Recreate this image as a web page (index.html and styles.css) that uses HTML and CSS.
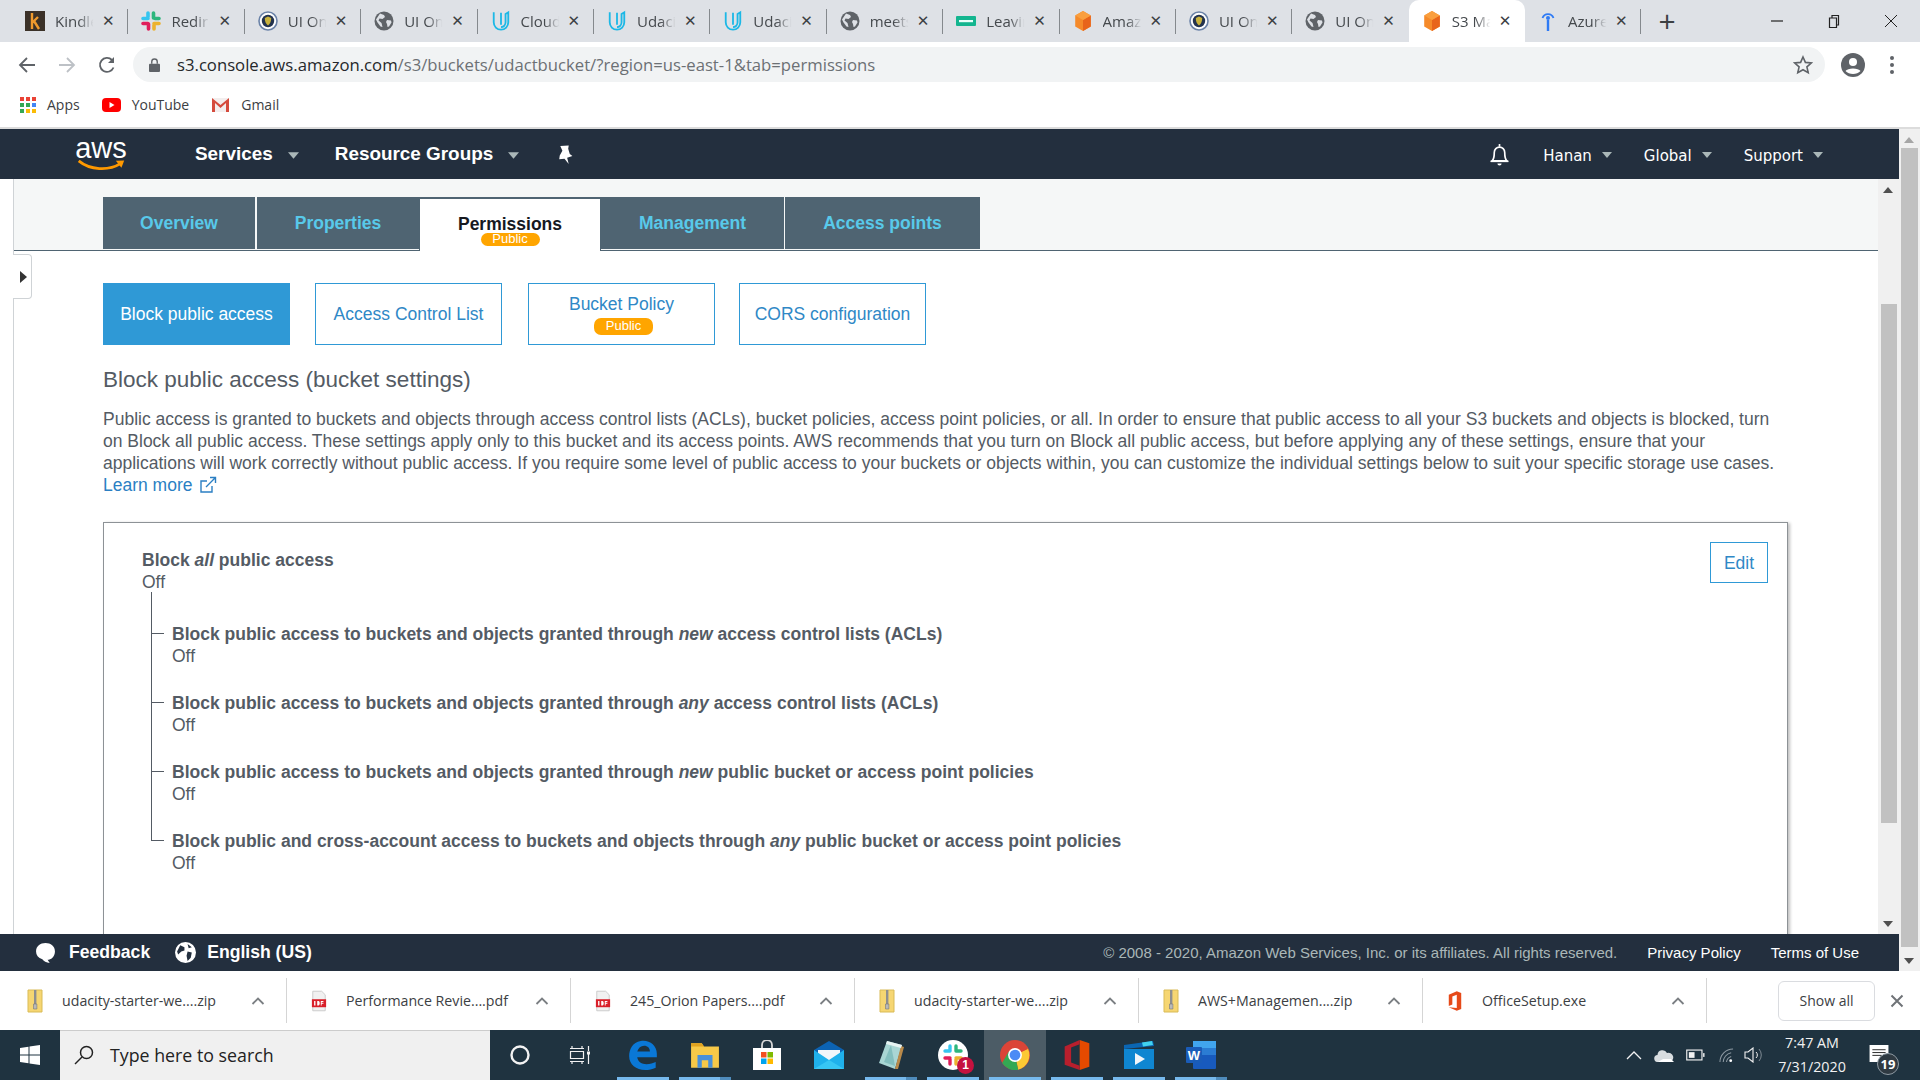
FILE: index.html
```html
<!DOCTYPE html>
<html lang="en">
<head>
<meta charset="utf-8">
<title>S3 Management Console</title>
<link rel="stylesheet" href="styles.css">
</head>
<body>
<svg class="defs" width="0" height="0" aria-hidden="true">
  <symbol id="globe" viewBox="0 0 20 20"><circle cx="10" cy="10" r="9.500" fill="#5f6368"/><path d="M6 2.500l4 1.500 1 2-2.500 2-3-.5-1 2 3 2.500 1 4-2-.5-3-4-1.500-3zM13 9l4 .5.500 2-2.500 4-1.500.5-.5-3-1-2z" fill="#dee1e6"/></symbol>
  <symbol id="udacity" viewBox="0 0 22 22"><path d="M3 1.500v11c0 4.500 3.500 8 8 8s8-3.500 8-8v-11l-3 1.800v9.200c0 3-2.200 5.200-5 5.200" fill="none" stroke="#1cb8e6" stroke-width="2"/><path d="M11 2v13" stroke="#1cb8e6" stroke-width="2"/></symbol>
  <symbol id="seal" viewBox="0 0 20 20"><circle cx="10" cy="10" r="9" fill="#fff" stroke="#6b83a8" stroke-width="1.600"/><circle cx="10" cy="10" r="6.200" fill="#23334f"/><path d="M10 5.500l3.200 1.500c0 4-1.400 6-3.200 7.500C8.200 13 6.800 11 6.800 7z" fill="#c9b23c"/></symbol>
  <symbol id="cube" viewBox="0 0 20 24"><path d="M10 1l8.500 5v12L10 23l-8.500-5V6z" fill="#f58a2a"/><path d="M10 11l8.500-5v12L10 23z" fill="#e8641b"/><path d="M10 1l8.500 5L10 11 1.500 6z" fill="#fa9f3e"/></symbol>
  <symbol id="zip" viewBox="0 0 16 24"><path d="M1 1h14v22H1z" fill="#f6d672" stroke="#d9bb57"/><path d="M7 1h2.400v14H7z" fill="#8f8f8f"/><path d="M6.500 15h3.400v5H6.500z" fill="#b9b9b9" stroke="#777" stroke-width=".6"/></symbol>
  <symbol id="pdf" viewBox="0 0 18 24"><path d="M2 1h10l4 4v18H2z" fill="#f1f1f1" stroke="#c8c8c8"/><path d="M1 10h16v9H1z" fill="#d9202a"/><path d="M3.500 17v-5h1.500v5zM7 17v-5h1.500c1.800 0 1.800 5 0 5zM11 17v-5h3v1h-2v1h2v1h-2v2z" fill="#fff"/></symbol>
  <symbol id="chev" viewBox="0 0 14 10"><path d="M1.500 8L7 2.500 12.500 8" fill="none" stroke="#7b7f83" stroke-width="1.800"/></symbol>
  <symbol id="caret" viewBox="0 0 10 6"><path d="M0 0h10L5 6z" fill="#aab7b8"/></symbol>
</svg>

<header class="tabstrip">
  <div class="tab"><svg class="fav" viewBox="0 0 20 20"><rect width="20" height="20" fill="#3b3128"/><path d="M7 2v16M7 12l6-6M9 10l5 8" stroke="#f09a2d" stroke-width="2.400" fill="none"/></svg><span class="tab-label">Kindle</span><span class="tab-x">✕</span></div>
  <div class="tab"><svg class="fav" viewBox="0 0 20 20"><g stroke-width="3.600" stroke-linecap="round"><path d="M7 2v4M2 7.500h5" stroke="#36c5f0"/><path d="M18 7.500h-4M12.500 2v5" stroke="#2eb67d"/><path d="M13 18v-4M18 12.500h-5" stroke="#ecb22e"/><path d="M2 12.500h5M7.500 18v-5" stroke="#e01e5a"/></g></svg><span class="tab-label">Redire</span><span class="tab-x">✕</span></div>
  <div class="tab"><svg class="fav"><use href="#seal"/></svg><span class="tab-label">UI On</span><span class="tab-x">✕</span></div>
  <div class="tab"><svg class="fav"><use href="#globe"/></svg><span class="tab-label">UI On</span><span class="tab-x">✕</span></div>
  <div class="tab"><svg class="fav"><use href="#udacity"/></svg><span class="tab-label">Cloud</span><span class="tab-x">✕</span></div>
  <div class="tab"><svg class="fav"><use href="#udacity"/></svg><span class="tab-label">Udaci</span><span class="tab-x">✕</span></div>
  <div class="tab"><svg class="fav"><use href="#udacity"/></svg><span class="tab-label">Udaci</span><span class="tab-x">✕</span></div>
  <div class="tab"><svg class="fav"><use href="#globe"/></svg><span class="tab-label">meets</span><span class="tab-x">✕</span></div>
  <div class="tab"><svg class="fav" viewBox="0 0 20 20"><rect y="5" width="20" height="10" rx="1" fill="#13b58f"/><rect x="3" y="9" width="14" height="2.200" fill="#e9fff9"/></svg><span class="tab-label">Leavin</span><span class="tab-x">✕</span></div>
  <div class="tab"><svg class="fav"><use href="#cube"/></svg><span class="tab-label">Amaz</span><span class="tab-x">✕</span></div>
  <div class="tab"><svg class="fav"><use href="#seal"/></svg><span class="tab-label">UI On</span><span class="tab-x">✕</span></div>
  <div class="tab tab-before-active"><svg class="fav"><use href="#globe"/></svg><span class="tab-label">UI On</span><span class="tab-x">✕</span></div>
  <div class="tab tab-active"><svg class="fav"><use href="#cube"/></svg><span class="tab-label">S3 Ma</span><span class="tab-x">✕</span></div>
  <div class="tab"><svg class="fav" viewBox="0 0 20 22"><path d="M4.500 8a5.800 5.800 0 0 1 11 0" fill="none" stroke="#2f7bf5" stroke-width="1.800"/><circle cx="10" cy="8" r="2" fill="#2f7bf5"/><path d="M10 10v11" stroke="#2f7bf5" stroke-width="2.400"/></svg><span class="tab-label">Azure</span><span class="tab-x">✕</span></div>
  <span class="newtab">+</span>
  <div class="winctl">
    <svg viewBox="0 0 14 14"><path d="M1 7h12" stroke="#222" stroke-width="1.200"/></svg>
    <svg viewBox="0 0 14 14"><path d="M2.500 4h7v9.500h-7zM5 4V1.500h6.500V11H9.500" fill="none" stroke="#222" stroke-width="1.200"/></svg>
    <svg viewBox="0 0 14 14"><path d="M1 1l12 12M13 1L1 13" stroke="#222" stroke-width="1"/></svg>
  </div>
</header>

<nav class="toolbar">
  <svg class="tool" viewBox="0 0 18 18"><path d="M17 9H2M9 2L2 9l7 7" fill="none" stroke="#5f6368" stroke-width="1.800"/></svg>
  <svg class="tool" viewBox="0 0 18 18"><path d="M1 9h15M9 2l7 7-7 7" fill="none" stroke="#bdc1c6" stroke-width="1.800"/></svg>
  <svg class="tool" viewBox="0 0 18 18"><path d="M15.500 11.500A7 7 0 1 1 14 4" fill="none" stroke="#5f6368" stroke-width="1.800"/><path d="M16 1v6h-6z" fill="#5f6368"/></svg>
  <div class="omnibox">
    <svg class="lock" viewBox="0 0 12 15"><path d="M3 6V4a3 3 0 0 1 6 0v2" fill="none" stroke="#5f6368" stroke-width="1.500"/><rect y="6" width="12" height="9" rx="1" fill="#5f6368"/></svg>
    <span class="url"><b>s3.console.aws.amazon.com</b>/s3/buckets/udactbucket/?region=us-east-1&amp;tab=permissions</span>
    <svg class="star" viewBox="0 0 20 20"><path d="M10 2l2.400 5.400 5.900.6-4.400 3.900 1.300 5.800L10 14.700l-5.200 3 1.300-5.800L1.700 8l5.900-.6z" fill="none" stroke="#5f6368" stroke-width="1.600"/></svg>
  </div>
  <svg class="avatar" viewBox="0 0 24 24"><circle cx="12" cy="12" r="12" fill="#5f6368"/><circle cx="12" cy="9" r="4" fill="#fff"/><path d="M4.500 18c2-3.500 13-3.500 15 0-3.500 4-11.500 4-15 0z" fill="#fff"/></svg>
  <span class="kebab"><i></i><i></i><i></i></span>
</nav>

<nav class="bookmarks">
  <a class="bm"><svg class="bm-ic apps" viewBox="0 0 16 16"><g fill="#ea4335"><rect width="4" height="4"/><rect x="6" width="4" height="4"/><rect x="12" width="4" height="4"/></g><g fill="#34a853"><rect y="6" width="4" height="4"/><rect x="6" y="6" width="4" height="4"/></g><rect x="12" y="6" width="4" height="4" fill="#4285f4"/><g fill="#fbbc05"><rect x="6" y="12" width="4" height="4"/><rect x="12" y="12" width="4" height="4"/></g><rect y="12" width="4" height="4" fill="#34a853"/></svg>Apps</a>
  <a class="bm"><svg class="bm-ic yt" viewBox="0 0 19 14"><rect width="19" height="14" rx="4" fill="#f00"/><path d="M7.500 4l5 3-5 3z" fill="#fff"/></svg>YouTube</a>
  <a class="bm"><svg class="bm-ic gm" viewBox="0 0 19 15"><path d="M1 1h17v14H1z" fill="#f3eeee"/><path d="M1 15V1l8.500 7L18 1v14h-3V6l-5.500 5L4 6v9z" fill="#d54b3d"/></svg>Gmail</a>
</nav>

<div class="console">
  <div class="page">
    <div class="awsnav">
      <div class="aws-logo"><span>aws</span><svg viewBox="0 0 52 14"><path d="M2 2c12 10 32 11 45 3" fill="none" stroke="#f90" stroke-width="3"/><path d="M42 2l9-.5-3 8z" fill="#f90"/></svg></div>
      <span class="nav-main nav-services">Services</span><svg class="nav-caret"><use href="#caret"/></svg>
      <span class="nav-main nav-groups">Resource Groups</span><svg class="nav-caret"><use href="#caret"/></svg>
      <svg class="pin" viewBox="0 0 16 18"><path d="M4 1l8-.5-.5 3 1.500 5 2.500 2-5 1.500L12 18 8 13l-5 .5.500-3.500 2.500-4.500z" fill="#fff"/></svg>
      <span class="nav-space"></span>
      <svg class="bell" viewBox="0 0 20 22"><path d="M3 17c2-2 2-4 2-8a5 5 0 0 1 10 0c0 4 0 6 2 8z" fill="none" stroke="#fff" stroke-width="1.600"/><path d="M1.500 17.500h17" stroke="#fff" stroke-width="1.600"/><path d="M8 19.500a2 2 0 0 0 4 0z" fill="#fff"/><path d="M10 1v2.500" stroke="#fff" stroke-width="1.600"/></svg>
      <span class="nav-sub">Hanan</span><svg class="nav-caret sm"><use href="#caret"/></svg>
      <span class="nav-sub">Global</span><svg class="nav-caret sm"><use href="#caret"/></svg>
      <span class="nav-sub">Support</span><svg class="nav-caret sm"><use href="#caret"/></svg>
    </div>

    <div class="workspace">
      <main class="main">
        <div class="tabbar">
          <a class="ptab ptab-first">Overview</a>
          <a class="ptab ptab-props">Properties</a>
          <a class="ptab ptab-on">Permissions<span class="badge badge-tab">Public</span></a>
          <a class="ptab ptab-mgmt">Management</a>
          <a class="ptab ptab-ap">Access points</a>
        </div>
        <span class="handle"><i></i></span>
        <div class="body">
          <div class="subtabs">
            <a class="sub sub-on">Block public access</a>
            <a class="sub">Access Control List</a>
            <a class="sub sub-policy">Bucket Policy<span class="badge badge-sub">Public</span></a>
            <a class="sub sub-cors">CORS configuration</a>
          </div>
          <h2 class="title">Block public access (bucket settings)</h2>
          <p class="intro">Public access is granted to buckets and objects through access control lists (ACLs), bucket policies, access point policies, or all. In order to ensure that public access to all your S3 buckets and objects is blocked, turn<br>on Block all public access. These settings apply only to this bucket and its access points. AWS recommends that you turn on Block all public access, but before applying any of these settings, ensure that your<br>applications will work correctly without public access. If you require some level of public access to your buckets or objects within, you can customize the individual settings below to suit your specific storage use cases.<br><a class="learn">Learn more <svg class="ext" viewBox="0 0 18 18"><path d="M13 10v6H2V5h6" fill="none" stroke="#2b7fc3" stroke-width="1.400"/><path d="M7 11l9-9M11 1.500h5.500V7" fill="none" stroke="#2b7fc3" stroke-width="1.400"/></svg></a></p>
          <section class="card">
            <div class="card-head">
              <div class="card-lead"><strong>Block <em>all</em> public access</strong><span>Off</span></div>
              <a class="edit">Edit</a>
            </div>
            <ul class="tree">
              <li><strong>Block public access to buckets and objects granted through <em>new</em> access control lists (ACLs)</strong><span>Off</span></li>
              <li><strong>Block public access to buckets and objects granted through <em>any</em> access control lists (ACLs)</strong><span>Off</span></li>
              <li><strong>Block public access to buckets and objects granted through <em>new</em> public bucket or access point policies</strong><span>Off</span></li>
              <li><strong>Block public and cross-account access to buckets and objects through <em>any</em> public bucket or access point policies</strong><span>Off</span></li>
            </ul>
          </section>
        </div>
      </main>
      <div class="inner-scroll"><i class="arr up"></i><b class="inner-thumb"></b><i class="arr down"></i></div>
    </div>

    <footer class="awsfoot">
      <svg class="fic" viewBox="0 0 20 20"><path d="M10 1c5 0 9 3 9 8s-4 8-7 8l2 3c-3 0-6-2-7-3.500C3 15 1 12.500 1 9c0-5 4-8 9-8z" fill="#fff"/></svg>
      <span class="foot-b foot-fb">Feedback</span>
      <svg class="fic fic-globe" viewBox="0 0 20 20"><circle cx="10" cy="10" r="10" fill="#fff"/><path d="M5 3l4 2 0 3-3 1-3 3-1-3zM12 9l4 1-1 5-3 3-1-5zM12 2l4 3-3 1z" fill="#232f3e"/></svg>
      <span class="foot-b">English (US)</span>
      <span class="foot-space"></span>
      <span class="copy">© 2008 - 2020, Amazon Web Services, Inc. or its affiliates. All rights reserved.</span>
      <a class="flink">Privacy Policy</a>
      <a class="flink">Terms of Use</a>
    </footer>
  </div>
  <div class="outer-scroll"><i class="arr up light"></i><b class="outer-thumb"></b><i class="arr down"></i></div>
</div>

<section class="downloads">
  <div class="dl"><svg class="dl-ic"><use href="#zip"/></svg><span class="dl-name">udacity-starter-we....zip</span><svg class="dl-chev"><use href="#chev"/></svg></div>
  <div class="dl"><svg class="dl-ic"><use href="#pdf"/></svg><span class="dl-name">Performance Revie....pdf</span><svg class="dl-chev"><use href="#chev"/></svg></div>
  <div class="dl"><svg class="dl-ic"><use href="#pdf"/></svg><span class="dl-name">245_Orion Papers....pdf</span><svg class="dl-chev"><use href="#chev"/></svg></div>
  <div class="dl"><svg class="dl-ic"><use href="#zip"/></svg><span class="dl-name">udacity-starter-we....zip</span><svg class="dl-chev"><use href="#chev"/></svg></div>
  <div class="dl"><svg class="dl-ic"><use href="#zip"/></svg><span class="dl-name">AWS+Managemen....zip</span><svg class="dl-chev"><use href="#chev"/></svg></div>
  <div class="dl"><svg class="dl-ic" viewBox="0 0 18 24"><path d="M2 5l9-4 5 2v18l-5 2-9-4 9 1V5l-5 2v9l-4 1.500z" fill="#e64a19"/></svg><span class="dl-name">OfficeSetup.exe</span><svg class="dl-chev"><use href="#chev"/></svg></div>
  <a class="showall">Show all</a>
  <svg class="dl-close" viewBox="0 0 14 14"><path d="M1.500 1.500l11 11M12.500 1.500l-11 11" stroke="#6f7377" stroke-width="2"/></svg>
</section>

<footer class="taskbar">
  <div class="start"><svg viewBox="0 0 20 20"><path d="M0 3l8.500-1.200V9.500H0zM9.500 1.600L20 0v9.500H9.500zM0 10.500h8.500v7.700L0 17zM9.500 10.500H20V20L9.500 18.400z" fill="#fff"/></svg></div>
  <div class="search"><svg viewBox="0 0 20 20"><circle cx="12.500" cy="7.500" r="6" fill="none" stroke="#222" stroke-width="1.500"/><path d="M8 12l-7 7" stroke="#222" stroke-width="1.500"/></svg><span>Type here to search</span></div>
  <div class="sys"><svg viewBox="0 0 20 20"><circle cx="10" cy="10" r="8.500" fill="none" stroke="#f2f2f2" stroke-width="2.400"/></svg></div>
  <div class="sys"><svg viewBox="0 0 22 20"><path d="M1 3.500h14M1 16.500h14M1.500 6.500h13v7h-13zM3 1v2M13 1v2M3 17v2M13 17v2M19.500 1v5M19.500 9v10" fill="none" stroke="#f2f2f2" stroke-width="1.200"/><rect x="18" y="6.500" width="3" height="3" fill="#f2f2f2"/></svg></div>
  <div class="app run"><svg viewBox="0 0 26 26"><path d="M25 15H8c.5 4 4 6 8 6 3 0 6-1 8-2v5c-3 1.500-6 2-9 2-8 0-14-5-14-12C1 8 4 2 11 .8 18-.5 25 4 25 12zM19 10c0-3-2-5-5-5-3 0-5 2-6 5z" fill="#0a78d7"/></svg></div>
  <div class="app run multi"><svg viewBox="0 0 28 26"><path d="M1 2h10l2 3h14v20H1z" fill="#f7c948"/><path d="M1 2h10l2 3H1z" fill="#e0a21f"/><path d="M7 25V13h14v12h-4v-7h-6v7z" fill="#4a90d9"/></svg></div>
  <div class="app"><svg viewBox="0 0 28 30"><path d="M9 9V5a5 5 0 0 1 10 0v4" fill="none" stroke="#d8d8d8" stroke-width="1.800"/><rect y="8" width="28" height="22" fill="#fff"/><rect x="8" y="12" width="5.500" height="5.500" fill="#f25022"/><rect x="14.500" y="12" width="5.500" height="5.500" fill="#7fba00"/><rect x="8" y="18.500" width="5.500" height="5.500" fill="#00a4ef"/><rect x="14.500" y="18.500" width="5.500" height="5.500" fill="#ffb900"/></svg></div>
  <div class="app"><svg viewBox="0 0 30 28"><path d="M0 9L15 0l15 9v19H0z" fill="#0c63b3"/><path d="M4 9h22v7l-11 6-11-6z" fill="#f2f6fa"/><path d="M0 9l15 10L30 9v19H0z" fill="#1fb1ec"/><path d="M0 28l15-9 15 9z" fill="#37c6f4"/></svg></div>
  <div class="app run multi"><svg viewBox="0 0 28 30"><path d="M10 1l15 4-7 24L2 23z" fill="#a9d6d4"/><path d="M24 6l3 1-6 22-3 0z" fill="#b98a4a"/><path d="M10 1l15 4-1 3L9 4z" fill="#e7f3f2"/><path d="M14 5l-7 17 11 4z" fill="#74b5b5" opacity=".7"/></svg></div>
  <div class="app run notif"><svg viewBox="0 0 30 30"><circle cx="15" cy="15" r="15" fill="#fff"/><g stroke-width="3.400" stroke-linecap="round"><path d="M12 6v5M7 11h5" stroke="#36c5f0"/><path d="M18 11h5M18 6v5" stroke="#2eb67d"/><path d="M18 24v-5M23 18h-5" stroke="#ecb22e"/><path d="M7 18h5M12 24v-5" stroke="#e01e5a"/></g></svg><span class="count">1</span></div>
  <div class="app run active"><svg viewBox="0 0 28 28"><circle cx="14" cy="14" r="14" fill="#db4437"/><path d="M14 14L26 8a14 14 0 0 1-9 19.700z" fill="#fcc934"/><path d="M14 14l3 13.700A14 14 0 0 1 2 21.500L8 11z" fill="#34a853"/><path d="M14 8h12v.5L14 14z" fill="#db4437"/><circle cx="14" cy="14" r="6.500" fill="#fff"/><circle cx="14" cy="14" r="5" fill="#4c8bf5"/></svg></div>
  <div class="app run"><svg viewBox="0 0 25 28"><path d="M15 0l9 3v22l-9 3z" fill="#e64a00"/><path d="M15 0v4L7 7v14l8 3v4L1 23V6z" fill="#b81f2d"/></svg></div>
  <div class="app run"><svg viewBox="0 0 30 28"><path d="M0 8h30v20H0z" fill="#0f86d1"/><path d="M0 4l29-4 1 5-30 3z" fill="#0a66b3"/><path d="M18 1.500l10-1.500 1 4-10 1.500z" fill="#42d2ee"/><path d="M11 12l10 6-10 6z" fill="#f2f6fa"/></svg></div>
  <div class="app run multi"><svg viewBox="0 0 30 28"><rect x="7" width="23" height="28" rx="1" fill="#185abd"/><rect x="7" width="23" height="7" fill="#41a5ee"/><rect x="7" y="7" width="23" height="7" fill="#2b7cd3"/><rect y="6" width="16" height="16" rx="1" fill="#1a5cb8"/><text class="wdoc" x="8" y="18.500">W</text></svg></div>
  <div class="tray">
    <svg class="t-caret" viewBox="0 0 16 10"><path d="M1 9l7-7 7 7" fill="none" stroke="#f2f2f2" stroke-width="1.300"/></svg>
    <svg class="t-cloud" viewBox="0 0 20 13"><path d="M4 13a3.500 3.500 0 0 1-.5-7A5 5 0 0 1 13 4a4 4 0 0 1 3 9z" fill="#d8dde0"/><path d="M4 13l5-3 8 0 3 3z" fill="#fff"/></svg>
    <svg class="t-bat" viewBox="0 0 20 12"><rect x=".8" y=".8" width="16" height="10.400" fill="none" stroke="#f2f2f2" stroke-width="1.200"/><rect x="3" y="3" width="6" height="6" fill="#f2f2f2"/><rect x="18" y="4" width="1.500" height="4" fill="#f2f2f2"/></svg>
    <svg class="t-wifi" viewBox="0 0 16 16"><path d="M1 15A14 14 0 0 1 15 1M4.500 15A10.500 10.500 0 0 1 13 5M8 15a7 7 0 0 1 5-6" fill="none" stroke="#8e9aa3" stroke-width="1.100"/><circle cx="12.500" cy="13.500" r="1.500" fill="#fff"/></svg>
    <svg class="t-vol" viewBox="0 0 20 16"><path d="M1 5h3l5-4v14l-5-4H1z" fill="none" stroke="#f2f2f2" stroke-width="1.100"/><path d="M12 5a4 4 0 0 1 0 6" fill="none" stroke="#f2f2f2"/><path d="M15 2a9 9 0 0 1 0 12" fill="none" stroke="#7f8b94"/></svg>
    <div class="clock"><span>7:47 AM</span><span>7/31/2020</span></div>
    <div class="note"><svg viewBox="0 0 20 18"><path d="M0 0h20v18H0z" fill="#fff"/><path d="M3 5h14M3 8h14M3 11h10" stroke="#222" stroke-width="1"/></svg><span class="note-n">19</span></div>
  </div>
</footer>
</body>
</html>
```

FILE: styles.css
```css
* { box-sizing: border-box; }
html, body { margin: 0; height: 1080px; overflow: hidden; }
body { display: flex; flex-direction: column; width: 1920px; background: #fff; font-family: "Liberation Sans", Arial, sans-serif; }
.defs { position: absolute; }
a { text-decoration: none; }

/* browser tab strip */
.tabstrip { height: 42px; flex: none; background: #dee1e6; display: flex; align-items: center; padding-left: 12px; }
.tab { width: 116.4px; height: 42px; flex: none; display: flex; align-items: center; padding-left: 13px; position: relative; }
.tab::after { content: ""; position: absolute; right: 0; top: 9px; height: 25px; width: 1px; background: #85898d; }
.tab-before-active::after, .tab-active::after { display: none; }
.tab-active { background: #fff; border-radius: 10px 10px 0 0; }
.fav { width: 20px; height: 22px; flex: none; }
.tab-label { width: 47px; margin-left: 10px; font: 15px "Open Sans", sans-serif; color: #45494d; white-space: nowrap; overflow: hidden; -webkit-mask-image: linear-gradient(90deg, #000 50%, transparent 82%); mask-image: linear-gradient(90deg, #000 50%, transparent 82%); }
.tab-x { margin-left: 0; font: 700 15px "DejaVu Sans", sans-serif; color: #3c4043; }
.newtab { margin-left: 17px; font: 400 30px "Open Sans", sans-serif; color: #3c4043; line-height: 42px; }
.winctl { margin-left: auto; display: flex; align-items: center; gap: 43px; padding-right: 22px; }
.winctl svg { width: 14px; height: 14px; }

/* toolbar */
.toolbar { height: 40px; flex: none; display: flex; align-items: center; padding: 5px 0 0 18px; }
.tool { width: 18px; height: 18px; flex: none; margin-right: 22px; }
.tool:nth-child(3) { margin-right: 17px; }
.omnibox { width: 1692px; height: 35px; border-radius: 18px; background: #f1f3f4; display: flex; align-items: center; padding: 0 12px 0 16px; }
.lock { width: 11px; height: 14px; flex: none; }
.url { margin-left: 17px; font: 16.700px "Open Sans", sans-serif; color: #6c7074; white-space: nowrap; }
.url b { font-weight: 400; color: #25282b; }
.star { width: 20px; height: 20px; margin-left: auto; }
.avatar { width: 24px; height: 24px; margin-left: 16px; }
.kebab { display: flex; flex-direction: column; gap: 3px; margin-left: 25px; }
.kebab i { width: 4px; height: 4px; border-radius: 50%; background: #5f6368; }

/* bookmarks */
.bookmarks { height: 45px; flex: none; display: flex; align-items: center; padding-left: 20px; gap: 22px; }
.bm { display: flex; align-items: center; font: 14px "Open Sans", sans-serif; color: #3c4043; }
.bm-ic { margin-right: 11px; }
.apps { width: 16px; height: 16px; }
.yt { width: 19px; height: 14px; }
.gm { width: 19px; height: 15px; }

/* console frame */
.console { height: 844px; flex: none; display: flex; border-top: 2px solid #dcdcdc; }
.page { width: 1899px; flex: none; display: flex; flex-direction: column; height: 100%; }
.awsnav { height: 50px; flex: none; background: #232f3e; display: flex; align-items: center; color: #fff; padding-right: 76px; }
.aws-logo { width: 50px; margin-left: 76px; display: flex; flex-direction: column; align-items: center; }
.aws-logo span { font: 400 29px/22px "Liberation Sans", sans-serif; color: #fff; height: 22px; }
.aws-logo svg { width: 50px; height: 13px; }
.nav-main { font-weight: 700; font-size: 18.900px; }
.nav-services { margin-left: 69px; }
.nav-groups { margin-left: 36px; }
.nav-caret { width: 11px; height: 7px; margin-left: 15px; margin-top: 3px; }
.nav-caret.sm { width: 10px; height: 6px; margin-left: 10px; margin-right: 32px; margin-top: 2px; }
.nav-caret.sm:last-child { margin-right: 0; }
.pin { width: 17px; height: 19px; margin-left: 37px; }
.nav-space { flex: 1; }
.bell { width: 21px; height: 23px; margin-right: 33px; }
.nav-sub { font: 15px "DejaVu Sans", sans-serif; padding-top: 3px; }

.workspace { flex: 1; min-height: 0; display: flex; }
.main { width: 1878px; flex: none; padding-left: 13px; position: relative; overflow: hidden; }
.main::before { content: ""; position: absolute; left: 13px; top: 0; bottom: 0; width: 1px; background: #cfd3d6; }
.tabbar { height: 72px; padding: 18px 0 0 90px; background: #f5f7f7; border-bottom: 1px solid #4f6472; display: flex; align-items: flex-start; gap: 2px; }
.ptab { height: 52px; background: #4f6472; color: #58c9ea; font-weight: 700; font-size: 17.500px; display: flex; flex-direction: column; align-items: center; justify-content: center; flex: none; }
.ptab-first { width: 152px; }
.ptab-props { width: 162px; }
.ptab-mgmt { width: 183px; margin-left: -2px; }
.ptab-ap { width: 195px; margin-left: -1px; }
.ptab-on { width: 182px; height: 54px; margin-left: -2px; background: #fff; color: #16191f; border: 1px solid #4f6472; border-width: 2px 1px 0; justify-content: flex-start; padding-top: 15px; line-height: 20px; }
.badge { background: #ffa500; color: #fff; font-weight: 400; font-size: 13px; border-radius: 7px; display: block; text-align: center; }
.badge-tab { width: 59px; height: 13px; line-height: 12px; margin-top: -1px; }
.handle { position: absolute; left: 13px; top: 75px; width: 19px; height: 45px; background: #fff; border: 1px solid #cfd3d6; border-left: 0; border-radius: 0 4px 4px 0; display: flex; align-items: center; justify-content: center; }
.handle i { width: 0; height: 0; border: 6px solid transparent; border-left: 7px solid #333; border-right: 0; margin-left: 3px; }

.body { padding: 32px 0 0 90px; }
.subtabs { display: flex; gap: 25px; }
.sub { width: 187px; height: 62px; border: 1px solid #2f99d6; color: #2f88c6; font-size: 17.500px; display: flex; flex-direction: column; align-items: center; justify-content: center; line-height: 22px; }
.sub-on { background: #2f99d6; color: #fff; }
.sub-policy { margin-left: 1px; }
.sub-cors { margin-left: -1px; }
.badge-sub { width: 59px; height: 17px; line-height: 16px; margin: 3px 0 0 4px; font-size: 13px; }
.title { margin: 22px 0 15px; font-weight: 400; font-size: 22.500px; line-height: 26px; color: #545b64; }
.intro { margin: 0; font-size: 17.500px; line-height: 22px; color: #545b64; white-space: nowrap; }
.learn { color: #2b7fc3; }
.ext { width: 18px; height: 18px; vertical-align: -3px; margin-left: 2px; }

.card { margin-top: 26px; width: 1685px; height: 700px; border: 1px solid #8d9296; box-shadow: 2px 1px 3px rgba(0,0,0,.25); padding: 19px 19px 0 38px; background: #fff; color: #545b64; font-size: 17.500px; line-height: 22px; }
.card-head { display: flex; justify-content: space-between; align-items: flex-start; }
.card-lead { padding-top: 7px; margin-right: auto; }
.card strong, .card span { display: block; }
.edit { width: 58px; height: 41px; border: 1px solid #2f99d6; color: #2f88c6; display: flex; align-items: center; justify-content: center; }
.tree { list-style: none; margin: -1px 0 0 9px; padding: 0; }
.tree li { position: relative; height: 69px; padding: 25px 0 0 21px; }
.tree li:first-child { height: 75px; padding-top: 31px; }
.tree li::before { content: ""; position: absolute; left: 0; top: 0; bottom: 0; width: 1px; background: #545b64; }
.tree li::after { content: ""; position: absolute; left: 0; bottom: 33px; width: 13px; height: 1px; background: #545b64; }
.tree li:last-child::before { bottom: 33px; }

.inner-scroll { width: 21px; flex: none; background: #f0f0f0; position: relative; }
.outer-scroll { width: 21px; flex: none; background: #f0f0f0; position: relative; height: 842px; }
.arr { position: absolute; left: 5px; width: 0; height: 0; border: 5px solid transparent; }
.arr.up { border-top: 0; border-bottom: 6px solid #505050; top: 8px; }
.arr.up.light { border-bottom-color: #a6a6a6; }
.arr.down { border-bottom: 0; border-top: 6px solid #505050; bottom: 7px; }
.inner-thumb { position: absolute; left: 3px; right: 2px; top: 125px; height: 519px; background: #c1c1c1; }
.outer-thumb { position: absolute; left: 2px; right: 2px; top: 19px; height: 799px; background: #c1c1c1; }

.awsfoot { height: 37px; flex: none; background: #232f3e; display: flex; align-items: center; padding: 0 40px 0 35px; color: #fff; }
.fic { width: 21px; height: 21px; flex: none; margin-right: 13px; }
.fic-globe { margin-right: 11px; }
.foot-b { font-weight: 700; font-size: 17.600px; }
.foot-fb { margin-right: 25px; }
.foot-space { flex: 1; }
.copy { font-size: 15px; color: #aab7b8; margin-right: 30px; }
.flink { font-size: 15px; color: #fff; margin-right: 30px; }
.flink:last-child { margin-right: 0; }

/* downloads */
.downloads { height: 59px; flex: none; display: flex; align-items: center; padding-left: 3px; position: relative; }
.dl { width: 284px; height: 45px; flex: none; display: flex; align-items: center; padding-left: 24px; border-right: 1px solid #d5d5d5; }
.dl-ic { width: 16px; height: 24px; flex: none; }
.dl-name { margin-left: 19px; width: 170px; font: 14.200px "Open Sans", sans-serif; color: #3c4043; white-space: nowrap; }
.dl-chev { width: 14px; height: 10px; margin-left: 19px; }
.showall { width: 97px; height: 40px; margin-left: 71px; border: 1px solid #dadce0; border-radius: 6px; display: flex; align-items: center; justify-content: center; font: 14px "Open Sans", sans-serif; color: #3c4043; }
.dl-close { width: 14px; height: 14px; margin-left: 15px; }

/* taskbar */
.taskbar { height: 50px; flex: none; background: #1f3340; display: flex; align-items: center; }
.start { width: 60px; height: 50px; display: flex; align-items: center; justify-content: center; }
.start svg { width: 20px; height: 20px; }
.search { width: 430px; height: 50px; background: #f0f0f0; display: flex; align-items: center; padding: 0 0 2px 14px; border-top: 1px solid #ccc; }
.search svg { width: 20px; height: 20px; }
.search span { margin-left: 16px; font: 17.800px "Open Sans", sans-serif; color: #222; }
.sys { width: 60px; height: 50px; display: flex; align-items: center; justify-content: center; }
.sys svg { width: 22px; height: 20px; }
.sys + .sys { margin-right: 2px; }
.app { width: 62px; height: 50px; flex: none; display: flex; align-items: center; justify-content: center; position: relative; }
.app svg { width: 30px; height: 30px; }
.app.run::after { content: ""; position: absolute; left: 5px; right: 5px; bottom: 0; height: 3px; background: #76b9ed; }
.app.multi::after { background: linear-gradient(90deg, #76b9ed 78%, #4f8cbc 78%); }
.app.active { background: #4c5c66; }
.wdoc { font: 700 13px "Liberation Sans", sans-serif; fill: #fff; text-anchor: middle; }
.count { position: absolute; right: 10px; bottom: 6px; width: 17px; height: 17px; border-radius: 50%; background: #c5123f; color: #fff; font: 700 12px/17px "Liberation Sans", sans-serif; text-align: center; }
.tray { margin-left: auto; display: flex; align-items: center; height: 50px; color: #f2f2f2; }
.t-caret { width: 16px; height: 10px; margin-right: 12px; }
.t-cloud { width: 20px; height: 13px; margin-right: 12px; }
.t-bat { width: 19px; height: 12px; margin-right: 14px; }
.t-wifi { width: 15px; height: 15px; margin-right: 10px; }
.t-vol { width: 20px; height: 16px; }
.clock { width: 84px; margin-left: 6px; margin-right: 2px; display: flex; flex-direction: column; align-items: center; font: 14.300px/24px "Open Sans", sans-serif; }
.note { width: 64px; height: 50px; position: relative; display: flex; align-items: center; justify-content: flex-start; padding-left: 13px; }
.note svg { width: 20px; height: 17px; margin-top: -3px; }
.note-n { position: absolute; left: 21px; top: 23px; width: 22px; height: 22px; border-radius: 50%; background: #2f3a42; border: 1px solid #8e9aa3; color: #fff; font: 700 13px/20px "Open Sans", sans-serif; text-align: center; }
```
